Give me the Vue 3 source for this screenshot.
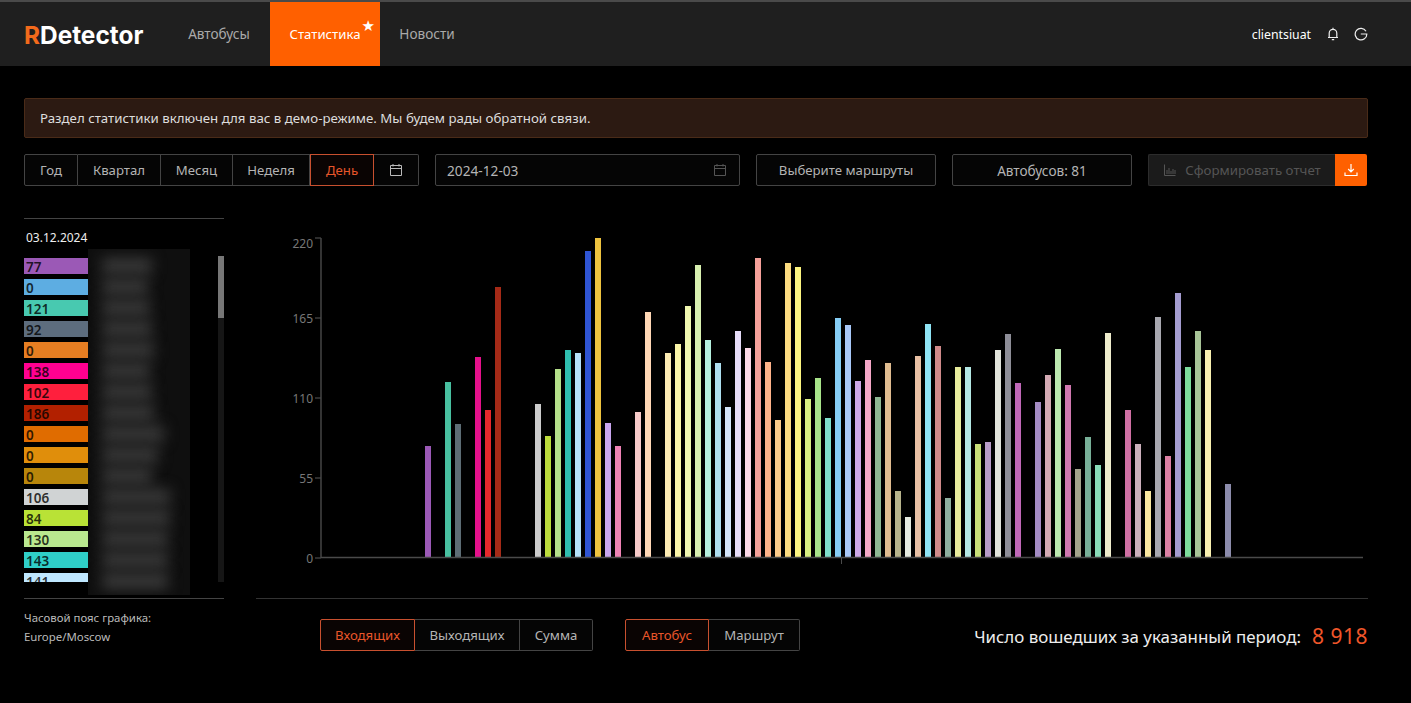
<script setup>
const sidebar = [
  ['77', '#9b59b6'], ['0', '#5dade2'], ['121', '#48c9b0'], ['92', '#5d6d7e'], ['0', '#e67e22'],
  ['138', '#ff0090'], ['102', '#ff1f3d'], ['186', '#b22000'], ['0', '#e06c00'], ['0', '#e08e0b'],
  ['0', '#b8860b'], ['106', '#d0d3d4'], ['84', '#b9e236'], ['130', '#b9e88f'], ['143', '#2fcfc8'], ['141', '#bfe7ff']
]
const bars = [
  [428, 446, '#9b59b6'], [448, 382, '#48c0a0'], [458, 424, '#5d6d75'], [478, 357, '#e6118c'], [488, 410, '#e8282c'],
  [498, 287, '#a52a17'], [538, 404, '#cccccc'], [548, 436, '#bcdc3c'], [558, 369, '#b5e08a'], [568, 350, '#2fbfb0'],
  [578, 353, '#b5e2fa'], [588, 251, '#2f55d4'], [598, 238, '#eec33f'], [608, 423, '#c9a6ef'], [618, 446, '#ee82b5'],
  [638, 412, '#f7cac9'], [648, 312, '#ffd7b5'], [668, 353, '#fdebb3'], [678, 344, '#fbf6a8'], [688, 306, '#f0f7b0'],
  [698, 265, '#d8f0b0'], [708, 340, '#b5f0de'], [718, 363, '#aedff0'], [728, 407, '#d3e5fa'], [738, 331, '#e6dcf8'],
  [748, 348, '#fcd8e8'], [758, 258, '#f5a09a'], [768, 362, '#ffb38a'], [778, 420, '#fdcb8a'], [788, 263, '#fddc80'],
  [798, 267, '#fdf580'], [808, 399, '#d8ef80'], [818, 378, '#a8e48a'], [828, 418, '#7fe0cc'], [838, 318, '#85cdf5'],
  [848, 325, '#a8c8f8'], [858, 381, '#cda8e8'], [868, 360, '#f5a8c8'], [878, 397, '#8fb894'], [888, 363, '#e0bc90'],
  [898, 491, '#b8b48c'], [908, 517, '#e6ebe0'], [918, 356, '#e8c0a4'], [928, 324, '#8fe4f5'], [938, 346, '#cf8a8a'],
  [948, 498, '#8fb0a0'], [958, 367, '#e8ec9c'], [968, 367, '#b4e8e4'], [978, 444, '#c8e078'], [988, 442, '#b89cc8'],
  [998, 350, '#e2e4dc'], [1008, 334, '#8e8e98'], [1018, 383, '#c068b8'], [1038, 402, '#a48cc4'], [1048, 375, '#d4aab4'],
  [1058, 349, '#bce8b0'], [1068, 385, '#d078b0'], [1078, 469, '#a4a48c'], [1088, 437, '#78b098'], [1098, 465, '#88dcb8'],
  [1108, 333, '#eeeccc'], [1128, 410, '#d070a4'], [1138, 444, '#ccb0bc'], [1148, 491, '#fbe8a0'], [1158, 317, '#a8a8b0'],
  [1168, 456, '#dc80a4'], [1178, 293, '#a49cd0'], [1188, 367, '#7cdc9c'], [1198, 331, '#a8c498'], [1208, 350, '#f8f0b0'],
  [1228, 484, '#8c8cac']
]
const yTicks = [[220, 238, 243], [165, 318, 318], [110, 398, 398], [55, 478, 478], [0, 558, 558]]
const blurRows = [50, 46, 48, 50, 52, 48, 50, 52, 62, 56, 50, 68, 68, 66, 66, 66]
</script>

<template>
  <div class="page">
    <header class="nav">
      <div class="logo"><span class="logo-r">R</span>Detector</div>
      <nav class="menu">
        <a class="menu-item">Автобусы</a>
        <a class="menu-item active">Статистика<span class="star">★</span></a>
        <a class="menu-item">Новости</a>
      </nav>
      <div class="user">
        <span class="username">clientsiuat</span>
        <svg class="nav-icon" viewBox="0 0 14 14" fill="none" stroke="#eee" stroke-width="1.2">
          <path d="M3.2 10.4V6.2a3.8 3.8 0 0 1 7.6 0v4.2M2 10.5h10M5.8 12.6h2.4M7 .8v1.6" />
        </svg>
        <svg class="nav-icon" viewBox="0 0 14 14" fill="none" stroke="#eee" stroke-width="1.2">
          <path d="M12 4.2A5.8 5.8 0 1 0 12.8 7H6.8" />
        </svg>
      </div>
    </header>

    <main class="content">
      <div class="alert">Раздел статистики включен для вас в демо-режиме. Мы будем рады обратной связи.</div>

      <div class="toolbar">
        <div class="group">
          <button class="seg w-god">Год</button>
          <button class="seg w-kv">Квартал</button>
          <button class="seg w-mes">Месяц</button>
          <button class="seg w-ned">Неделя</button>
          <button class="seg on w-den">День</button>
          <button class="seg w-cal">
            <svg class="ico" viewBox="0 0 14 14" fill="none" stroke="#bbb" stroke-width="1">
              <path d="M1.5 2.5h11v10h-11zM1.5 5.5h11M4 1v2.5M10 1v2.5" />
            </svg>
          </button>
        </div>
        <div class="field date">
          <span>2024-12-03</span>
          <svg class="ico" viewBox="0 0 14 14" fill="none" stroke="#555" stroke-width="1">
            <path d="M1.5 2.5h11v10h-11zM1.5 5.5h11M4 1v2.5M10 1v2.5" />
          </svg>
        </div>
        <button class="field routes">Выберите маршруты</button>
        <button class="field buses">Автобусов: 81</button>
        <div class="report">
          <button class="report-main">
            <svg class="ico" viewBox="0 0 14 14" fill="none" stroke="#555" stroke-width="1">
              <path d="M1.5 1.5v11h11M4 11V7M6 11V5M8 11V8M10 11V6M12 11V7" />
            </svg>
            Сформировать отчет
          </button>
          <button class="report-dl">
            <svg class="ico" viewBox="0 0 14 14" fill="none" stroke="#fff" stroke-width="1.2">
              <path d="M7 1v7.5M4.2 6 7 8.8 9.8 6M1 9.5v3h12v-3" />
            </svg>
          </button>
        </div>
      </div>

      <section class="main">
        <aside class="side">
          <div class="side-date">03.12.2024</div>
          <div class="side-body">
            <ul class="legend">
              <li v-for="(row, i) in sidebar" :key="i" class="swatch" :style="{ background: row[1] }">{{ row[0] }}</li>
            </ul>
            <div class="blur">
              <div v-for="(w, i) in blurRows" :key="i" class="blur-row" :style="{ width: w + 'px' }"></div>
            </div>
            <div class="track"><div class="thumb"></div></div>
          </div>
        </aside>
        <div class="chart">
          <svg width="1112" height="398" viewBox="256 200 1112 398">
            <path d="M321 238V558" stroke="#4a4a4a" fill="none" stroke-width="1.4" />
            <g v-for="t in yTicks" :key="t[0]">
              <path :d="`M315 ${t[1]}H321`" stroke="#4a4a4a" stroke-width="1.2" />
              <text x="313" :y="t[2] + 4.5" text-anchor="end" class="tick">{{ t[0] }}</text>
            </g>
            <rect v-for="b in bars" :key="b[0]" :x="b[0] - 3" :y="b[1]" width="6" :height="558 - b[1]" :fill="b[2]" />
            <path d="M321 557.6H1363" stroke="#4a4a4a" stroke-width="1.5" />
            <path d="M841.5 558V564" stroke="#4a4a4a" />
          </svg>
        </div>
      </section>

      <div class="rules">
        <div class="rule-l"></div>
        <div class="rule-r"></div>
      </div>

      <footer class="foot">
        <div class="tz">
          <div>Часовой пояс графика:</div>
          <div>Europe/Moscow</div>
        </div>
        <div class="group g1">
          <button class="seg on w-in">Входящих</button>
          <button class="seg w-out">Выходящих</button>
          <button class="seg w-sum">Сумма</button>
        </div>
        <div class="group g2">
          <button class="seg on w-bus">Автобус</button>
          <button class="seg w-rt">Маршрут</button>
        </div>
        <div class="total">
          <span>Число вошедших за указанный период:</span>
          <span class="total-n">8 918</span>
        </div>
      </footer>
    </main>
  </div>
</template>

<style>
html, body { margin: 0; background: #000; }
</style>

<style scoped>
.page {
  width: 1411px;
  height: 703px;
  overflow: hidden;
  background: #000;
  font-family: "Noto Sans", "Open Sans", sans-serif;
  font-size: 13.2px;
  color: #b4b4b4;
}
.nav {
  height: 64px;
  border-top: 2px solid #4a4a4a;
  background: #1f1f1f;
  display: flex;
  align-items: stretch;
  padding-left: 24px;
  padding-right: 43px;
}
.logo {
  font-family: Inter, sans-serif;
  font-weight: 700;
  font-size: 24.4px;
  color: #fff;
  line-height: 66px;
  width: 146px;
  flex: none;
}
.logo-r { color: #f26a1b; }
.menu { display: flex; flex: 1; }
.menu-item {
  position: relative;
  width: 110px;
  box-sizing: border-box;
  text-align: center;
  line-height: 64px;
  font-size: 13.6px;
  color: #aaa;
}
.menu-item:first-child { width: 100px; padding-right: 2px; }
.menu-item:last-child { width: 94px; }
.menu-item.active { background: #ff6000; color: #fff; font-size: 13.2px; }
.star {
  position: absolute;
  top: -8px;
  right: 5px;
  color: #fff;
  font-size: 15px;
  font-family: "DejaVu Sans", sans-serif;
}
.user { display: flex; align-items: center; gap: 14px; }
.username { color: #fff; font-size: 12.3px; margin-right: 1px; }
.nav-icon { width: 14px; height: 14px; }
.content { padding: 32px 43px 0 24px; }
.alert {
  height: 38px;
  line-height: 38px;
  padding: 0 15px;
  background: #2c1a12;
  border: 1px solid #4a2b18;
  border-radius: 2px;
  color: #ddd;
  font-size: 13.27px;
}
.toolbar {
  margin-top: 16px;
  display: flex;
  gap: 16px;
  height: 32px;
}
button {
  font-family: inherit;
  font-size: 13.2px;
  color: #b4b4b4;
  background: transparent;
  margin: 0;
  padding: 0;
  cursor: default;
}
.group { display: flex; height: 32px; }
.seg {
  border: 1px solid #444;
  border-left-width: 0;
  box-sizing: border-box;
  height: 32px;
  background: #050505;
  display: flex;
  align-items: center;
  justify-content: center;
}
.seg:first-child { border-left-width: 1px; border-radius: 2px 0 0 2px; }
.seg:last-child { border-radius: 0 2px 2px 0; }
.seg.on { border: 1px solid #c8502f; color: #e8562a; background: #0a0403; }
.w-god { width: 54px; }
.w-kv { width: 83px; }
.w-mes { width: 72px; }
.w-ned { width: 77px; }
.w-den { width: 64px; }
.w-cal { width: 45px; }
.w-in { width: 95px; }
.w-out { width: 105px; }
.w-sum { width: 73px; }
.w-bus { width: 84px; }
.w-rt { width: 91px; }
.ico { width: 14px; height: 14px; flex: none; }
.field {
  border: 1px solid #444;
  border-radius: 2px;
  box-sizing: border-box;
  height: 32px;
  background: #050505;
  display: flex;
  align-items: center;
  justify-content: center;
}
.date { width: 305px; justify-content: space-between; padding: 0 12px 0 11px; font-size: 13.7px; }
.routes, .buses { width: 180px; }
.buses { font-size: 13.6px; }
.report { display: flex; width: 219px; height: 32px; }
.report-main {
  flex: 1;
  display: flex;
  align-items: center;
  justify-content: center;
  gap: 8px;
  background: #1b1b1b;
  border: 1px solid #2c2c2c;
  border-right: 0;
  border-radius: 2px 0 0 2px;
  color: #555;
  font-size: 13.3px;
}
.report-dl {
  width: 32px;
  background: #ff6000;
  border: 0;
  border-radius: 0 2px 2px 0;
  display: flex;
  align-items: center;
  justify-content: center;
}
.main { display: flex; margin-top: 14px; height: 398px; gap: 32px; }
.side {
  width: 200px;
  flex: none;
  display: flex;
  flex-direction: column;
  border-top: 1px solid #444;
  margin-top: 18px;
  height: 379px;
}
.side-date { color: #eee; font-size: 12px; line-height: 16px; margin-top: 11px; padding-left: 2px; }
.side-body { position: relative; margin-top: 12px; height: 324px; }
.legend {
  list-style: none;
  margin: 0;
  padding: 0;
  height: 324px;
  overflow: hidden;
  display: flex;
  flex-direction: column;
  gap: 5px;
}
.swatch {
  width: 64px;
  height: 16px;
  flex: none;
  line-height: 18px;
  font-size: 13.5px;
  font-weight: 600;
  color: rgba(0, 0, 0, 0.8);
  padding-left: 2px;
  box-sizing: border-box;
}
.blur {
  position: absolute;
  left: 64px;
  top: -9px;
  width: 102px;
  height: 346px;
  background: #0f0f0f;
  padding: 9px 0 0 14px;
  box-sizing: border-box;
  display: flex;
  flex-direction: column;
  gap: 5px;
  overflow: hidden;
}
.blur-row {
  height: 16px;
  flex: none;
  background: #3a3a3a;
  filter: blur(7px);
}
.track { position: absolute; right: 0; top: -2px; width: 6px; height: 326px; background: #161616; }
.thumb { width: 6px; height: 62px; background: #777; }
.chart { flex: 1; }
.chart svg { display: block; }
.tick { fill: #777; font-size: 12px; font-family: "Noto Sans", sans-serif; }
.rules { display: flex; gap: 32px; }
.rule-l { width: 200px; border-top: 1px solid #444; }
.rule-r { flex: 1; border-top: 1px solid #333; }
.foot { display: flex; align-items: flex-start; }
.tz { width: 296px; flex: none; font-size: 11.4px; line-height: 19px; color: #bbb; padding-top: 9px; }
.g1 { margin-top: 20px; }
.g2 { margin-top: 20px; margin-left: 32px; }
.total { margin-left: auto; margin-top: 23px; display: flex; align-items: center; gap: 11px; color: #eee; font-size: 16.9px; }
.total-n { color: #f0562a; font-size: 21px; letter-spacing: 0.5px; }
</style>
